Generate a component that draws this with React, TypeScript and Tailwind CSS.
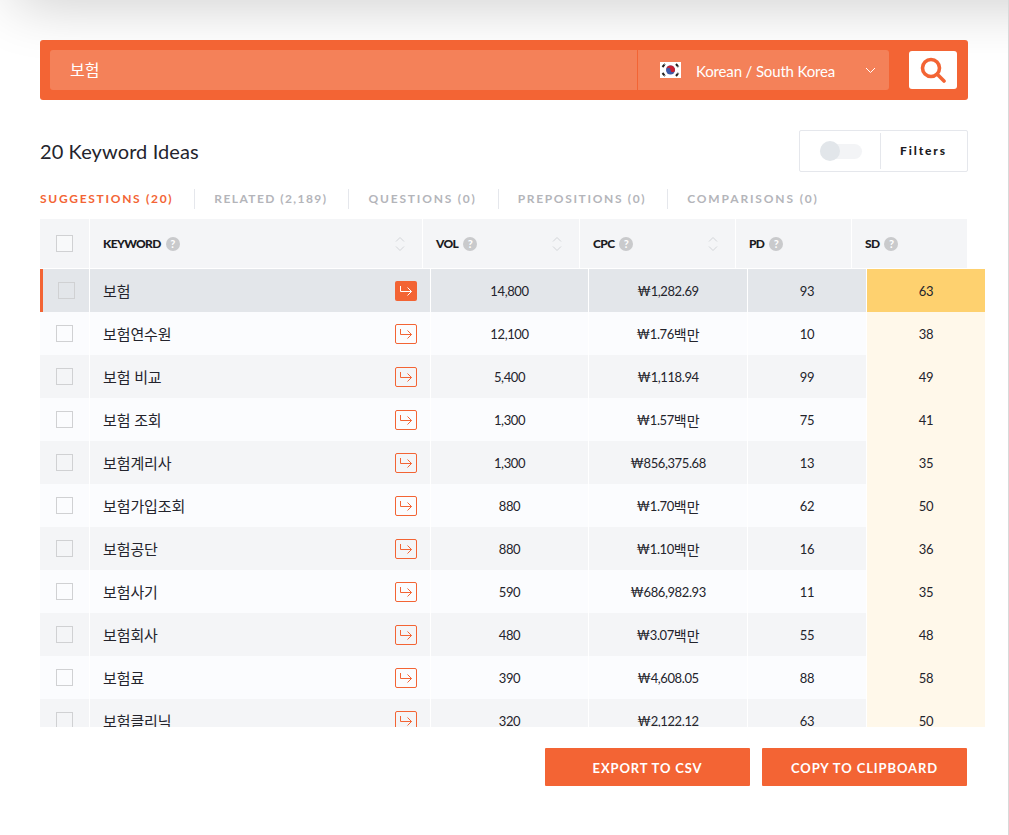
import React from 'react';

interface KeywordRow {
  keyword: string;
  vol: string;
  cpc: string;
  unit?: string;
  pd: string;
  sd: string;
}

const rows: KeywordRow[] = [
  { keyword: '보험', vol: '14,800', cpc: '₩1,282.69', pd: '93', sd: '63' },
  { keyword: '보험연수원', vol: '12,100', cpc: '₩1.76', unit: '백만', pd: '10', sd: '38' },
  { keyword: '보험 비교', vol: '5,400', cpc: '₩1,118.94', pd: '99', sd: '49' },
  { keyword: '보험 조회', vol: '1,300', cpc: '₩1.57', unit: '백만', pd: '75', sd: '41' },
  { keyword: '보험계리사', vol: '1,300', cpc: '₩856,375.68', pd: '13', sd: '35' },
  { keyword: '보험가입조회', vol: '880', cpc: '₩1.70', unit: '백만', pd: '62', sd: '50' },
  { keyword: '보험공단', vol: '880', cpc: '₩1.10', unit: '백만', pd: '16', sd: '36' },
  { keyword: '보험사기', vol: '590', cpc: '₩686,982.93', pd: '11', sd: '35' },
  { keyword: '보험회사', vol: '480', cpc: '₩3.07', unit: '백만', pd: '55', sd: '48' },
  { keyword: '보험료', vol: '390', cpc: '₩4,608.05', pd: '88', sd: '58' },
  { keyword: '보험클리닉', vol: '320', cpc: '₩2,122.12', pd: '63', sd: '50' },
];

const tabs = [
  { label: 'SUGGESTIONS (20)', cls: 'text-[12px] font-bold tracking-[1.7px] text-[#f36434]' },
  { label: 'RELATED (2,189)', cls: 'text-[12px] font-bold tracking-[1.43px] text-[#b4b5ba]' },
  { label: 'QUESTIONS (0)', cls: 'text-[12px] font-bold tracking-[1.8px] text-[#b4b5ba]' },
  { label: 'PREPOSITIONS (0)', cls: 'text-[12px] font-bold tracking-[1.65px] text-[#b4b5ba]' },
  { label: 'COMPARISONS (0)', cls: 'text-[12px] font-bold tracking-[1.85px] text-[#b4b5ba]' },
];

const HelpDot = () => (
  <span className="ml-[5px] flex h-[14px] w-[14px] items-center justify-center rounded-full bg-[#c9cacc] text-[11px] leading-none font-bold text-white">
    ?
  </span>
);

const SortArrows = () => (
  <svg width="12" height="16" viewBox="0 0 12 16" fill="none" stroke="#d3d5d9" strokeWidth="1">
    <path d="M2 5.5 6 1.5l4 4" />
    <path d="M2 10.5l4 4 4-4" />
  </svg>
);

const GoArrow = () => (
  <svg width="14" height="12" viewBox="0 0 14 12" fill="none" stroke="currentColor" strokeWidth="1">
    <path d="M1.5 1v5.5h11" />
    <path d="M8.5 2.5l4 4-4 4" />
  </svg>
);

const KoreaFlag = () => (
  <svg width="21" height="16" viewBox="0 0 21 16">
    <rect width="21" height="16" fill="#fff" />
    <circle cx="10.5" cy="8" r="4.5" fill="#3f5aa8" />
    <path d="M6 8a4.5 4.5 0 0 1 9 0 2.25 2.25 0 0 1-4.5 0 2.25 2.25 0 0 0-4.5 0z" fill="#c8202f" />
    <g stroke="#222" strokeWidth="2" strokeDasharray="3 0.5">
      <path d="M2.5 5l2.5-3" />
      <path d="M16 2l2.5 3" />
      <path d="M2.5 11l2.5 3" />
      <path d="M16 14l2.5-3" />
    </g>
  </svg>
);

const HeaderCell = ({ label, sortable }: { label: string; sortable?: boolean }) => (
  <div className="flex items-center justify-between border-r border-white bg-[#f4f5f7] pr-[16px] pl-[13px]">
    <div className="flex items-center">
      <span className="text-[12px] font-black tracking-[-0.65px] text-[#1b1b22]">{label}</span>
      <HelpDot />
    </div>
    {sortable && <SortArrows />}
  </div>
);

export default function App() {
  return (
    <div className="relative h-[835px] w-[1009px] overflow-hidden border-r border-[#d9d9d9] bg-white font-['Lato','Noto_Sans_CJK_KR',sans-serif] text-[#24242c]">
      {/* shadow of the header that sits just above the visible area */}
      <div className="absolute top-[-50px] right-[-80px] left-[15px] h-[50px] shadow-[0_0_60px_rgba(0,0,0,0.24)]" />

      <div className="pt-[40px] pr-[40px] pl-[40px]">
        {/* Search bar */}
        <div className="relative flex h-[60px] w-[928px] items-center rounded-[3px] bg-[#f36434] pl-[10px]">
          <div className="flex h-[40px] w-[587px] items-center rounded-l-[3px] bg-[#f48159] pl-[20px] text-[16px] text-white">
            보험
          </div>
          <div className="ml-[1px] flex h-[40px] w-[251px] items-center rounded-r-[3px] bg-[#f48159] pl-[22px] text-white">
            <KoreaFlag />
            <span className="ml-[15px] pt-[2px] text-[15px] tracking-[-0.15px]">Korean / South Korea</span>
            <svg className="ml-[30px]" width="11" height="7" viewBox="0 0 11 7" fill="none" stroke="#fff" strokeWidth="1">
              <path d="M1 1l4.5 4.5L10 1" />
            </svg>
          </div>
          <button className="ml-[20px] flex h-[38px] w-[48px] items-center justify-center rounded-[3px] bg-white">
            <svg width="26" height="26" viewBox="0 0 26 26" fill="none" stroke="#f36434" strokeWidth="3.6" strokeLinecap="round">
              <circle cx="11" cy="11" r="8.5" />
              <path d="M17.5 17.5 24 24" />
            </svg>
          </button>
        </div>

        {/* Title and filters */}
        <div className="mt-[30px] flex h-[42px] w-[928px] items-center justify-between">
          <h1 className="text-[20px] leading-none font-normal tracking-[0.1px] text-[#24242c]">20 Keyword Ideas</h1>
          <div className="flex h-[42px] w-[169px] items-center rounded-[2px] border border-[#e5e7ec]">
            <div className="flex h-[36px] w-[81px] items-center border-r border-[#e5e7ec] pl-[20px]">
              <div className="relative h-[15px] w-[42px] rounded-full bg-[#f3f4f6]">
                <div className="absolute top-[-3px] left-0 h-[20px] w-[20px] rounded-full bg-[#e2e6ea]" />
              </div>
            </div>
            <span className="ml-[19px] text-[12px] font-black tracking-[1.9px] text-[#1b1b22]">Filters</span>
          </div>
        </div>

        {/* Tabs */}
        <div className="mt-[17px] flex h-[20px] items-center">
          {tabs.map((tab, index) => (
            <div key={tab.label} className={index === 0 ? 'flex h-[20px] items-center' : 'ml-[21px] flex h-[20px] items-center border-l border-[#e5e7ec] pl-[19px]'}>
              <span className={tab.cls}>{tab.label}</span>
            </div>
          ))}
        </div>

        {/* Table */}
        <div className="mt-[10px] h-[508px] w-[945px] overflow-hidden">
          <div className="grid h-[50px] w-[928px] grid-cols-[50px_333px_157px_156px_116px_116px] border-b border-white">
            <div className="flex items-center justify-center border-r border-white bg-[#f4f5f7]">
              <div className="h-[17px] w-[17px] border border-[#d0d1d3] bg-white/40" />
            </div>
            <HeaderCell label="KEYWORD" sortable />
            <HeaderCell label="VOL" sortable />
            <HeaderCell label="CPC" sortable />
            <HeaderCell label="PD" />
            <HeaderCell label="SD" />
          </div>

          {rows.map((row, index) => {
            const active = index === 0;
            const bg = active ? 'bg-[#e3e6ea]' : index % 2 === 1 ? 'bg-[#fbfcfe]' : 'bg-[#f4f5f7]';
            return (
              <div key={row.keyword} className="grid h-[43px] grid-cols-[50px_341px_158px_159px_119px_118px] text-[13px] tracking-[-0.4px]">
                <div className={`flex items-center justify-center border-r border-white ${bg} ${active ? 'border-l-[3px] border-l-[#f36434]' : ''}`}>
                  <div className="h-[17px] w-[17px] border border-[#d0d1d3]" />
                </div>
                <div className={`flex items-center justify-between border-r border-white pr-[13px] pl-[13px] ${bg}`}>
                  <span className="pt-[1px] text-[15px] tracking-[-0.1px]">{row.keyword}</span>
                  <span className={active ? 'flex h-[20px] w-[22px] items-center justify-center rounded-[2px] bg-[#f36434] text-white' : 'flex h-[20px] w-[22px] items-center justify-center rounded-[2px] border border-[#f36434] text-[#f36434]'}>
                    <GoArrow />
                  </span>
                </div>
                <div className={`flex items-center justify-center border-r border-white pt-[2px] ${bg}`}>{row.vol}</div>
                <div className={`flex items-center justify-center border-r border-white pt-[2px] ${bg}`}>
                  {row.cpc}
                  {row.unit && <span className="text-[14px] tracking-normal">{row.unit}</span>}
                </div>
                <div className={`flex items-center justify-center border-r border-white pt-[2px] ${bg}`}>{row.pd}</div>
                <div className={active ? 'flex items-center justify-center bg-[#fed16f] pt-[2px]' : 'flex items-center justify-center bg-[#fff8ea] pt-[2px]'}>{row.sd}</div>
              </div>
            );
          })}
        </div>

        {/* Actions */}
        <div className="mt-[21px] flex w-[927px] justify-end gap-[12px]">
          <button className="h-[38px] w-[205px] rounded-[1px] bg-[#f36434] pt-[3px] text-[13px] font-bold tracking-[0.85px] text-white">EXPORT TO CSV</button>
          <button className="h-[38px] w-[205px] rounded-[1px] bg-[#f36434] pt-[3px] text-[13px] font-bold tracking-[0.9px] text-white">COPY TO CLIPBOARD</button>
        </div>
      </div>
    </div>
  );
}
